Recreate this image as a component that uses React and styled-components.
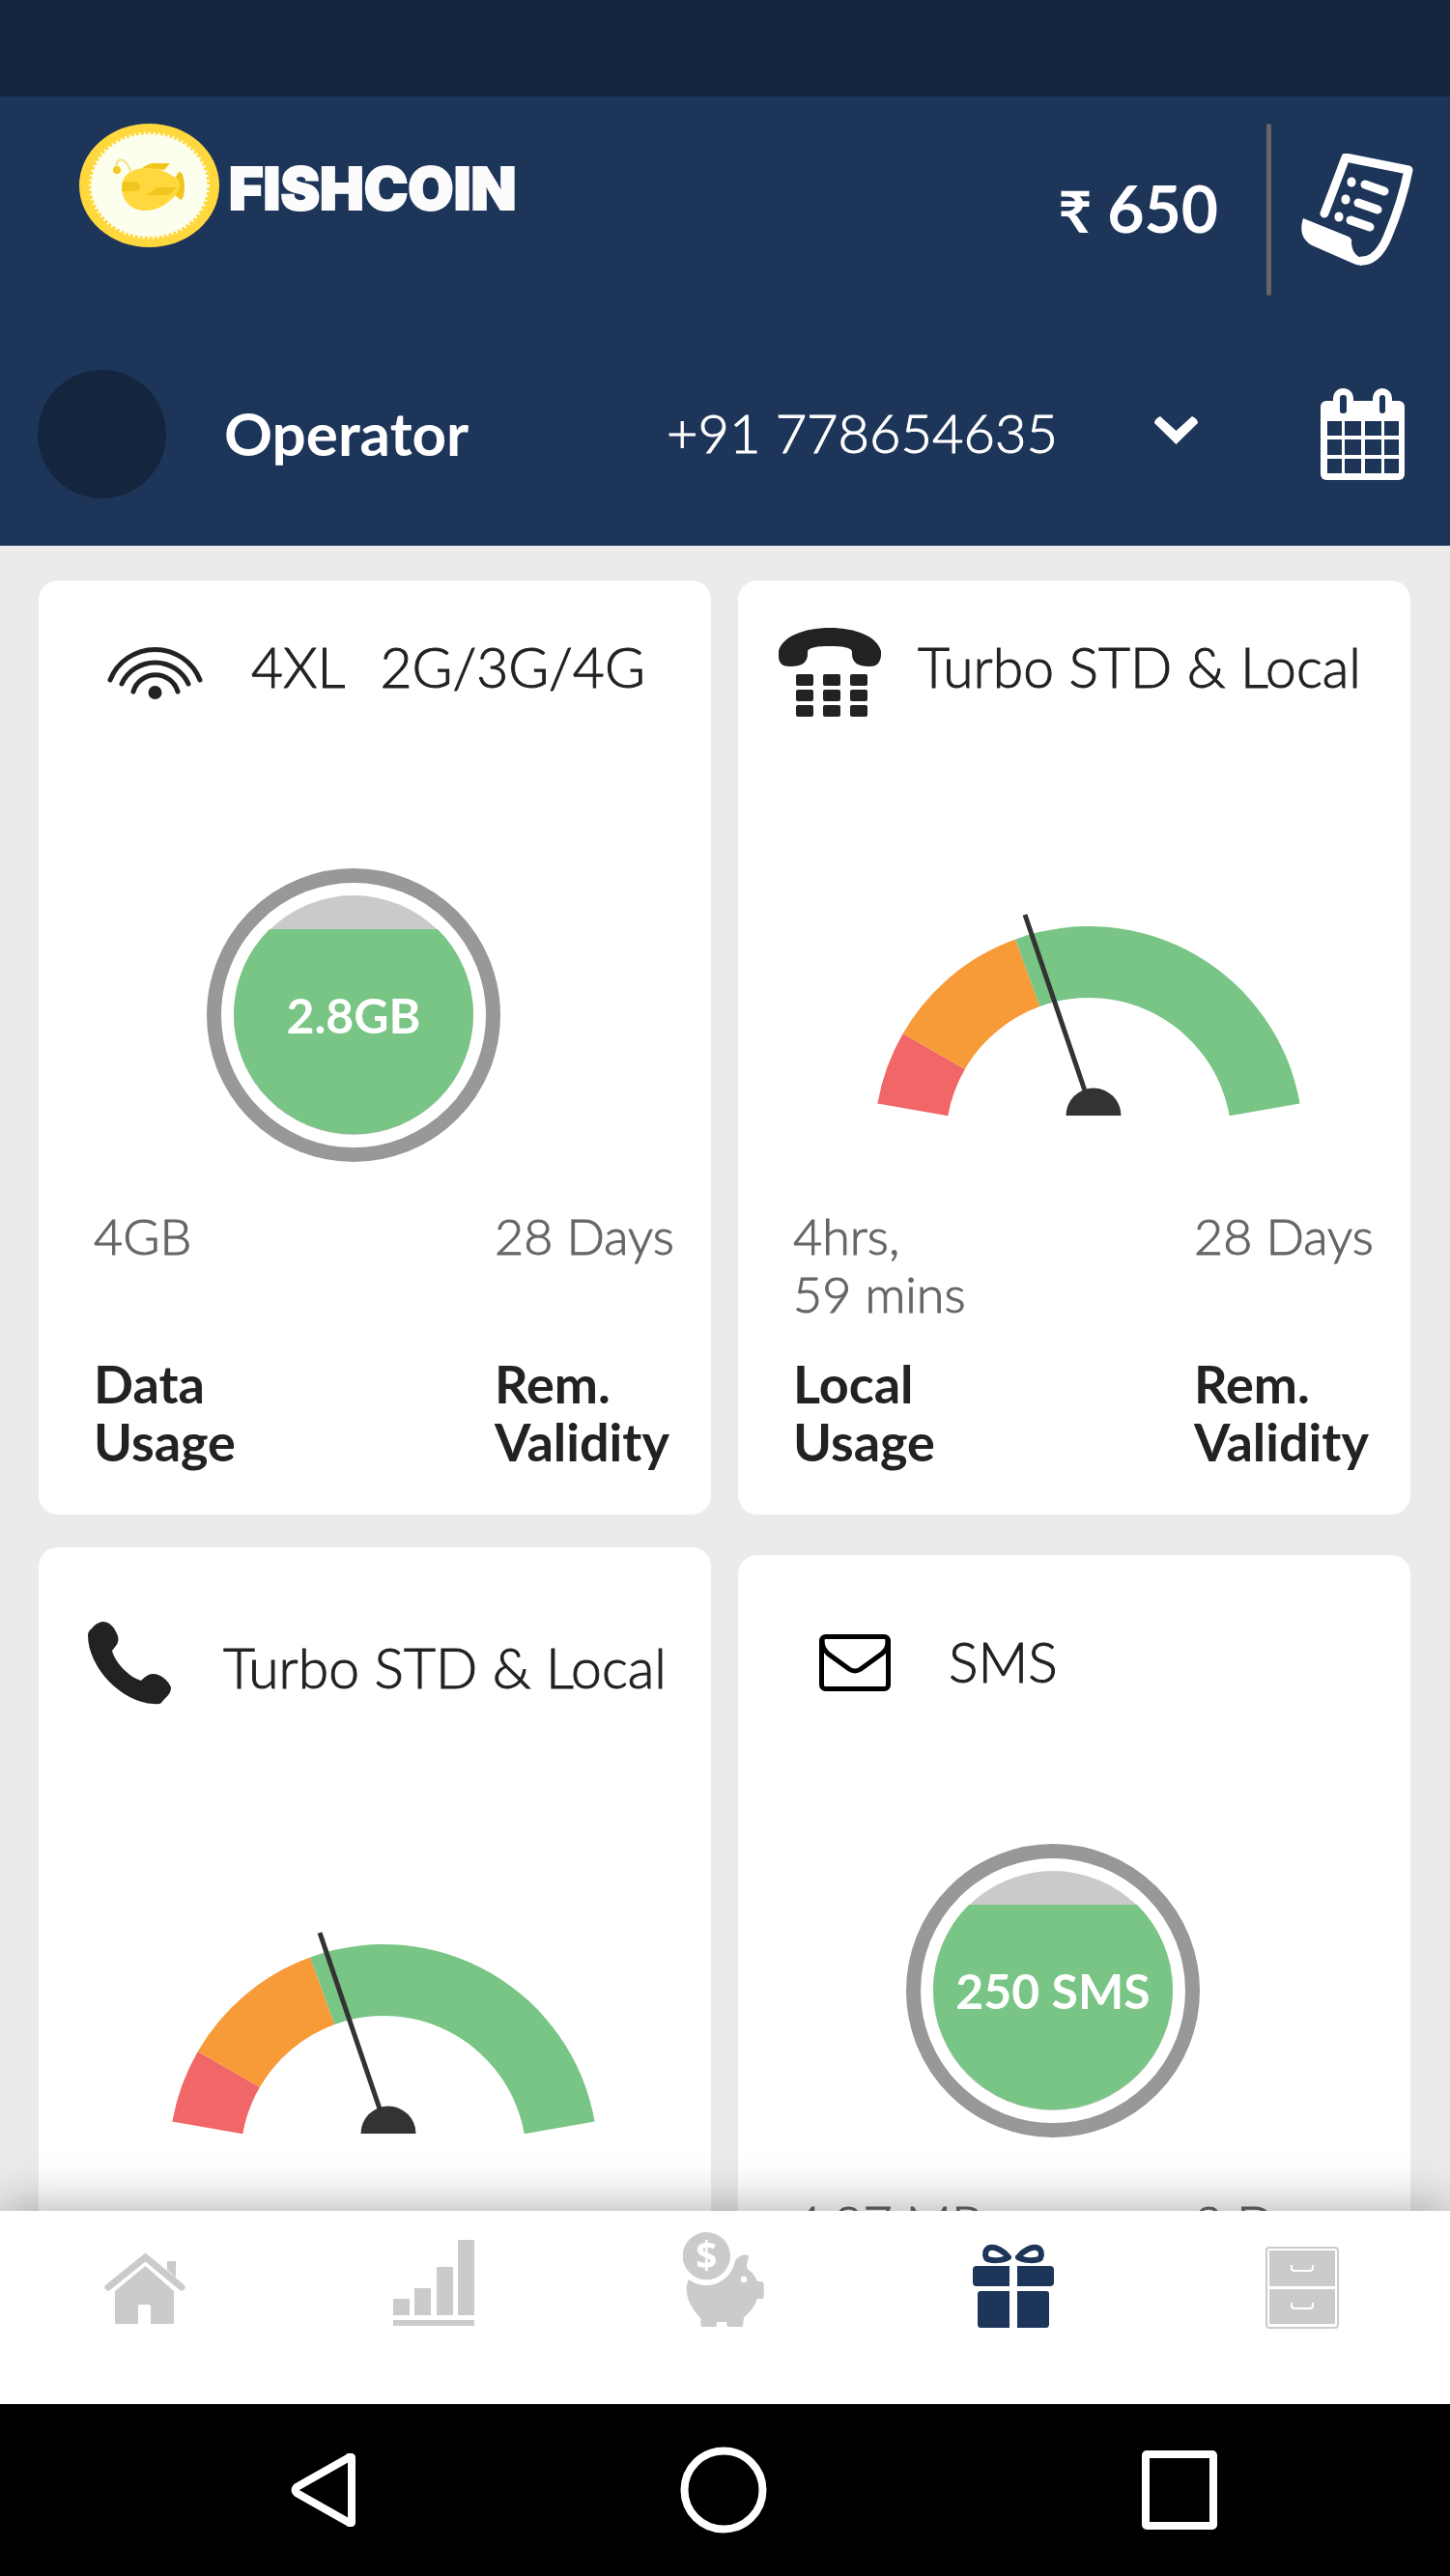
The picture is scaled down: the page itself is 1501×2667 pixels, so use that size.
import React from "react";
import styled, { createGlobalStyle } from "styled-components";

const color = {
  status: "#14263d",
  header: "#1e355a",
  page: "#ebebeb",
  ink: "#222221",
  muted: "#666666",
  idle: "#cbcbcb",
  green: "#79c585",
  orange: "#f79a38",
  red: "#f16667",
};

const GlobalStyle = createGlobalStyle`
  *, *::before, *::after { box-sizing: border-box; }
  body {
    margin: 0;
    background: ${color.page};
    color: ${color.ink};
    font-family: Lato, "Noto Sans", sans-serif;
  }
  svg { display: block; flex: none; }
`;

const Shell = styled.div`
  display: flex;
  flex-direction: column;
  height: 100vh;
`;

const StatusBar = styled.div`
  flex: none;
  height: 100px;
  background: ${color.status};
`;

const Header = styled.header`
  flex: none;
  display: flex;
  flex-direction: column;
  gap: 77px;
  padding: 28px 0 49px;
  background: ${color.header};
  color: #fff;
`;

const BrandRow = styled.div`
  display: flex;
  align-items: center;
  padding: 0 38px 0 82px;
`;

const Brand = styled.a`
  align-self: flex-start;
  display: flex;
  align-items: center;
  gap: 10px;
  margin-right: auto;
  color: #fcfcfc;
  text-decoration: none;
`;

const BrandName = styled.span`
  padding-top: 6px;
  font-family: Inter, sans-serif;
  font-size: 61px;
  font-weight: 900;
  line-height: 72px;
  -webkit-text-stroke: 2px;
`;

const Balance = styled.div`
  display: flex;
  align-items: baseline;
  gap: 16px;
  font-size: 66px;
  font-weight: 700;
  line-height: 80px;
`;

const Currency = styled.span`
  font-size: 60px;
`;

const Divider = styled.span`
  width: 5px;
  height: 178px;
  margin: 0 30px 0 50px;
  border-radius: 3px;
  background: ${color.muted};
`;

const IconButton = styled.button`
  flex: none;
  display: flex;
  padding: 0;
  border: 0;
  background: none;
  color: inherit;
  cursor: pointer;
`;

const OperatorRow = styled.div`
  display: flex;
  align-items: center;
  padding: 0 47px 0 39px;
`;

const Avatar = styled.span`
  flex: none;
  width: 133px;
  height: 133px;
  border-radius: 50%;
  background: ${color.status};
`;

const OperatorName = styled.span`
  margin: 0 auto 0 60px;
  padding-bottom: 4px;
  font-size: 62px;
  font-weight: 700;
  line-height: 72px;
`;

const NumberPicker = styled.label`
  display: grid;
  align-items: center;
  width: 550px;
  margin-right: 127px;

  & > * { grid-area: 1 / 1; }
  & > svg { justify-self: end; pointer-events: none; }
`;

const NumberSelect = styled.select`
  appearance: none;
  width: 100%;
  padding: 0 0 4px;
  border: 0;
  background: none;
  color: #fff;
  font: 300 56px/72px Lato, "Noto Sans", sans-serif;
  -webkit-text-stroke: 1px;
  cursor: pointer;
`;

const Board = styled.main`
  flex: 1;
  min-height: 0;
  overflow: hidden;
  display: flex;
  gap: 28px;
  padding: 36px 41px 36px 40px;
`;

const Column = styled.div`
  flex: 1;
  min-width: 0;
  display: flex;
  flex-direction: column;
  gap: ${(p) => p.$gap}px;
`;

const Card = styled.section`
  flex: none;
  min-height: 967px;
  padding-bottom: 45px;
  border-radius: 20px;
  background: #fff;
`;

const CardHead = styled.div`
  display: flex;
  align-items: center;
  gap: ${(p) => p.$gap}px;
  padding: ${(p) => p.$top}px 0 0 ${(p) => p.$left}px;
`;

const CardTitle = styled.h2`
  display: flex;
  gap: 36px;
  margin: 0;
  font-size: 57px;
  font-weight: 300;
  line-height: 60px;
  white-space: nowrap;
  -webkit-text-stroke: 1px;
`;

const Meter = styled.div`
  display: grid;
  place-items: center;
  justify-content: start;
  padding: ${(p) => p.$top}px 0 ${(p) => p.$bottom}px ${(p) => p.$left}px;

  & > * { grid-area: 1 / 1; }
`;

const MeterValue = styled.span`
  color: #fff;
  font-size: 50px;
  font-weight: 700;
  line-height: 60px;
`;

const Stats = styled.dl`
  display: grid;
  grid-template-columns: 415px 1fr;
  margin: 0;
  padding-left: 57px;
  line-height: 60px;
  white-space: pre-line;
`;

const Stat = styled.div`
  display: flex;
  flex-direction: column-reverse;
  justify-content: flex-end;
  gap: 34px;
`;

const StatLabel = styled.dt`
  font-size: 54px;
  font-weight: 700;
`;

const StatValue = styled.dd`
  min-height: 120px;
  margin: 0;
  color: ${color.muted};
  font-size: 52px;
  font-weight: 300;
  -webkit-text-stroke: 1px;
`;

const TabBar = styled.nav`
  position: relative;
  z-index: 1;
  flex: none;
  display: flex;
  align-items: flex-start;
  height: 200px;
  padding: 22px 3px 0 0;
  background: #fff;
  box-shadow: 0 0 50px rgba(0, 0, 0, 0.36);
`;

const Tab = styled.a`
  flex: 1;
  display: flex;
  justify-content: center;
  color: ${(p) => (p.$active ? color.header : color.idle)};
`;

const SystemBar = styled.div`
  position: relative;
  z-index: 2;
  flex: none;
  display: grid;
  grid-template-columns: 445fr 384fr 560fr;
  place-items: center;
  height: 178px;
  padding-left: 112px;
  background: #000;
  color: #fff;
`;

/* ---------- logo and header icons ---------- */

function CoinLogo() {
  return (
    <svg width="145" height="128" viewBox="0 0 145 128" aria-hidden="true">
      <ellipse cx="72.5" cy="64" rx="72.5" ry="64" fill="#ffd83d" />
      <ellipse cx="72.5" cy="64" rx="60" ry="53" fill="#fdffee" />
      <ellipse
        cx="72.5" cy="64" rx="61" ry="54"
        fill="none" stroke="#fdffee" strokeWidth="3" strokeDasharray="2 3"
      />
      <path d="M53 49C50 40 45 36 41 38Q38 40 38 47" fill="none" stroke="#f3df85" strokeWidth="2" />
      <circle cx="39" cy="48" r="4" fill="#f0cb25" />
      <path d="M65 46Q72 41 77 41H94L88 48Z" fill="#f0c61e" />
      <path d="M98 58L103 50Q108 49 109 64Q109 78 105 79L98 73Z" fill="#f0c61e" />
      <path d="M44 66C44 52 56 46 70 46C86 46 97 54 102 58Q106 65 102 71C94 82 82 90 68 90C54 90 44 80 44 66Z" fill="#ffd83d" />
      <path d="M45 60H58Q63 61 63 65Q63 69 58 70H44Z" fill="#f0c61e" />
      <path d="M70 74L79 67Q81 66 84 66H101L95 72Q93 74 89 74Z" fill="#f0c61e" />
    </svg>
  );
}

function StatementIcon() {
  return (
    <svg width="117" height="117" viewBox="0 0 117 117" fill="none" stroke="currentColor" strokeLinecap="round" strokeLinejoin="round" aria-hidden="true">
      <path d="M25 62L47 4L112 17C107 42 98 68 90 87C83 103 74 111 64 111" strokeWidth="9" />
      <path d="M3 67L50 86Q54 88 53 93C54 102 58 107 65 108L64 116Q58 116 53 113L12 95C2 89-1 80 3 67Z" fill="currentColor" stroke="none" />
      <path d="M53 29V30M47 47V48M40 65V66" strokeWidth="9" />
      <path d="M67 32L87 39M60 51L80 58M52 69L72 76" strokeWidth="9" />
    </svg>
  );
}

const calendarColumns = [[7, 15], [25, 17], [46, 17], [66, 15]];
const calendarRows = [[34, 15], [53, 16], [73, 15]];

function CalendarIcon() {
  return (
    <svg width="87" height="95" viewBox="0 0 87 95" aria-hidden="true">
      <rect y="13" width="87" height="82" rx="6" fill="currentColor" />
      <rect x="13" width="21" height="32" rx="10" fill="currentColor" />
      <rect x="54" width="20" height="32" rx="10" fill="currentColor" />
      <rect x="20" y="7" width="7" height="19" rx="3" fill={color.header} />
      <rect x="61" y="7" width="6" height="19" rx="3" fill={color.header} />
      {calendarRows.map(([y, h]) =>
        calendarColumns.map(([x, w]) => (
          <rect key={`${x}-${y}`} x={x} y={y} width={w} height={h} fill={color.header} />
        ))
      )}
    </svg>
  );
}

function ChevronIcon() {
  return (
    <svg width="45" height="38" viewBox="0 0 45 38" fill="currentColor" aria-hidden="true">
      <path d="M6 0L22.500 15L39 0Q45 3 45 7L22.500 29L0 7Q0 3 6 0Z" />
    </svg>
  );
}

/* ---------- card icons, all on a 106px tall canvas ---------- */

function SignalIcon() {
  return (
    <svg width="99" height="106" viewBox="0 0 99 106" fill="none" stroke={color.ink} strokeWidth="5" strokeLinecap="round" aria-hidden="true">
      <path d="M3 67A50 50 0 0 1 96 67" />
      <path d="M15 71A38 38 0 0 1 84 71" />
      <path d="M27 79A24 24 0 0 1 73 79" />
      <circle cx="49.500" cy="80" r="7" fill={color.ink} stroke="none" />
    </svg>
  );
}

function DeskPhoneIcon() {
  return (
    <svg width="106" height="106" viewBox="0 0 106 106" fill={color.ink} aria-hidden="true">
      <path d="M0 37C4 22 26 13 53 13C80 13 102 22 106 37V42C105 50 101 53 94 53C82 53 76 49 76 40V38C76 33 65 32 53 32C41 32 30 33 30 38V40C30 49 24 53 12 53C4 53 0 50 0 42Z" />
      {[61, 77, 93].map((y) =>
        [18, 46, 74].map((x) => (
          <rect key={`${x}-${y}`} x={x} y={y} width="18" height="12" rx="2" />
        ))
      )}
    </svg>
  );
}

function HandsetIcon() {
  return (
    <svg width="86" height="106" viewBox="0 0 86 106" fill={color.ink} aria-hidden="true">
      <path d="M0 20Q0 16 4 13C8 8 12 6 16 6C24 6 29 15 31 21C33 28 28 32 25 36C28 48 42 63 55 67C58 64 62 60 67 60C76 60 84 68 86 74C86 82 80 84 76 90Q74 92 68 91C36 90 0 54 0 20Z" />
    </svg>
  );
}

function EnvelopeIcon() {
  return (
    <svg width="74" height="106" viewBox="0 0 74 106" fill="none" stroke="#000" strokeWidth="5" aria-hidden="true">
      <rect x="2.500" y="27.500" width="69" height="54" rx="4" />
      <path d="M3 30C3 38 5 41 9 45L31 61Q37 65 43 61L65 45C70 41 71 38 71 30" />
    </svg>
  );
}

/* ---------- meters ---------- */

function Tank() {
  return (
    <svg width="304" height="304" viewBox="0 0 304 304" aria-hidden="true">
      <circle cx="152" cy="152" r="144.500" fill="#fff" stroke="#989898" strokeWidth="15" />
      <circle cx="152" cy="152" r="124" fill="#cacaca" />
      <path d="M65 63A124 124 0 1 0 239 63Z" fill={color.green} />
    </svg>
  );
}

function arcBand(from, to) {
  const at = (r, deg) => {
    const a = (deg * Math.PI) / 180;
    return `${219 - r * Math.cos(a)} ${235 - r * Math.sin(a)}`;
  };
  return `M${at(222, from)}A222 222 0 0 1 ${at(222, to)}L${at(148, to)}A148 148 0 0 0 ${at(148, from)}Z`;
}

function Dial() {
  return (
    <svg width="438" height="210" viewBox="0 0 438 210" aria-hidden="true">
      <path d={arcBand(10, 30)} fill={color.red} />
      <path d={arcBand(30, 70)} fill={color.orange} />
      <path d={arcBand(70, 170)} fill={color.green} />
      <path d="M153 1L219 195" stroke="#333" strokeWidth="5" />
      <path d="M195.500 209A28.500 28.500 0 0 1 252.500 209Z" fill="#333" />
    </svg>
  );
}

/* ---------- tab icons, all on a 100px tall canvas ---------- */

function HomeIcon() {
  return (
    <svg width="84" height="100" viewBox="0 0 84 100" fill="currentColor" aria-hidden="true">
      <path d="M4 57L42.500 26L80 57" fill="none" stroke="currentColor" strokeWidth="7" strokeLinecap="round" />
      <path d="M65 30H74V47L65 39Z" />
      <path d="M11 61L42.500 35L72 61V94Q72 95 70 95H48V77Q48 75 46 75H37Q35 75 35 77V95H13Q11 95 11 94Z" />
    </svg>
  );
}

function BarsIcon() {
  return (
    <svg width="84" height="100" viewBox="0 0 84 100" fill="currentColor" aria-hidden="true">
      <path d="M0 69H17V86H0ZM22 58H39V86H22ZM45 36H62V86H45ZM67 8H84V86H67ZM0 91H84V97H0Z" />
    </svg>
  );
}

const CoinSign = styled.text`
  font: 700 116px "Open Sans", sans-serif;
  text-anchor: middle;
`;

function PiggyIcon() {
  return (
    <svg width="84" height="100" viewBox="51 33 252 300" fill="currentColor" aria-hidden="true">
      <circle cx="124" cy="107" r="74" />
      <CoinSign x="124" y="148" fill="#fff">$</CoinSign>
      <path d="M70 180A90 90 0 0 0 212 125C218 108 240 100 254 105C258 120 243 128 252 148C270 160 278 175 281 186H293Q302 187 302 196V230Q302 240 292 240H281C275 265 255 285 243 295C240 300 238 305 238 320Q238 327 232 327H192Q187 327 187 320V312H156V320Q156 327 150 327H112Q106 327 106 320V300C80 275 62 240 62 210C62 195 66 185 70 180Z" />
      <circle cx="240" cy="180" r="10" fill="#fff" />
    </svg>
  );
}

function GiftIcon() {
  return (
    <svg width="84" height="100" viewBox="0 0 84 100" fill="currentColor" aria-hidden="true">
      <path d="M4 35H38V56H4Q0 56 0 52V39Q0 35 4 35ZM46 35H80Q84 35 84 39V52Q84 56 80 56H46Z" />
      <path d="M8 61H38V99H8Q5 99 5 95V64Q5 61 8 61ZM46 61H76Q79 61 79 64V95Q79 99 76 99H46Z" />
      <path d="M37 26C32 19 23 15 18 16C13 17 12 23 14 27C18 30 31 30 37 26ZM47 26C52 19 61 15 66 16C71 17 72 23 70 27C66 30 53 30 47 26Z" fill="none" stroke="currentColor" strokeWidth="6" strokeLinejoin="round" />
    </svg>
  );
}

function CabinetIcon() {
  return (
    <svg width="76" height="100" viewBox="0 0 76 100" fill="none" aria-hidden="true">
      <rect x="1" y="16" width="74" height="83" rx="3" stroke="currentColor" strokeWidth="2" />
      <path d="M4 19H72V56H4ZM4 59H72V95H4Z" fill="currentColor" />
      <path d="M27 34V37Q27 40 30 40H46Q49 40 49 37V34M27 73V76Q27 79 30 79H46Q49 79 49 76V73" stroke="#fff" strokeWidth="2" />
    </svg>
  );
}

/* ---------- page parts ---------- */

function StatList({ items }) {
  return (
    <Stats>
      {items.map((item) => (
        <Stat key={item.value}>
          {item.label && <StatLabel>{item.label}</StatLabel>}
          <StatValue>{item.value}</StatValue>
        </Stat>
      ))}
    </Stats>
  );
}

const tabs = [
  { name: "Home", Icon: HomeIcon },
  { name: "Usage", Icon: BarsIcon },
  { name: "Savings", Icon: PiggyIcon },
  { name: "Packs", Icon: GiftIcon, active: true },
  { name: "Records", Icon: CabinetIcon },
];

export default function App() {
  return (
    <Shell>
      <GlobalStyle />
      <StatusBar />
      <Header>
        <BrandRow>
          <Brand href="#home">
            <CoinLogo />
            <BrandName>FISHCOIN</BrandName>
          </Brand>
          <Balance>
            <Currency>₹</Currency>
            <span>650</span>
          </Balance>
          <Divider />
          <IconButton type="button" aria-label="Statement">
            <StatementIcon />
          </IconButton>
        </BrandRow>
        <OperatorRow>
          <Avatar />
          <OperatorName>Operator</OperatorName>
          <NumberPicker>
            <NumberSelect aria-label="Phone number" defaultValue="778654635">
              <option value="778654635">+91 778654635</option>
            </NumberSelect>
            <ChevronIcon />
          </NumberPicker>
          <IconButton type="button" aria-label="Calendar">
            <CalendarIcon />
          </IconButton>
        </OperatorRow>
      </Header>

      <Board>
        <Column $gap={34}>
          <Card>
            <CardHead $top={36} $left={71} $gap={50}>
              <SignalIcon />
              <CardTitle>
                <span>4XL</span>
                <span>2G/3G/4G</span>
              </CardTitle>
            </CardHead>
            <Meter $top={156} $left={174} $bottom={46}>
              <Tank />
              <MeterValue>2.8GB</MeterValue>
            </Meter>
            <StatList
              items={[
                { label: "Data\nUsage", value: "4GB" },
                { label: "Rem.\nValidity", value: "28 Days" },
              ]}
            />
          </Card>
          <Card>
            <CardHead $top={71} $left={51} $gap={54}>
              <HandsetIcon />
              <CardTitle>Turbo STD &amp; Local</CardTitle>
            </CardHead>
            <Meter $top={221} $left={138} $bottom={94}>
              <Dial />
            </Meter>
          </Card>
        </Column>

        <Column $gap={42}>
          <Card>
            <CardHead $top={36} $left={42} $gap={38}>
              <DeskPhoneIcon />
              <CardTitle>Turbo STD &amp; Local</CardTitle>
            </CardHead>
            <Meter $top={203} $left={144} $bottom={93}>
              <Dial />
            </Meter>
            <StatList
              items={[
                { label: "Local\nUsage", value: "4hrs,\n59 mins" },
                { label: "Rem.\nValidity", value: "28 Days" },
              ]}
            />
          </Card>
          <Card>
            <CardHead $top={57} $left={84} $gap={60}>
              <EnvelopeIcon />
              <CardTitle>SMS</CardTitle>
            </CardHead>
            <Meter $top={136} $left={174} $bottom={58}>
              <Tank />
              <MeterValue>250 SMS</MeterValue>
            </Meter>
            <StatList items={[{ value: "4.87 MB" }, { value: "2 Days" }]} />
          </Card>
        </Column>
      </Board>

      <TabBar>
        {tabs.map(({ name, Icon, active }) => (
          <Tab key={name} href={`#${name.toLowerCase()}`} aria-label={name} $active={active}>
            <Icon />
          </Tab>
        ))}
      </TabBar>

      <SystemBar>
        <IconButton type="button" aria-label="Back">
          <svg width="67" height="76" viewBox="0 0 67 76" fill="none" stroke="currentColor" strokeWidth="8" strokeLinejoin="round">
            <path d="M63 4V72Q61 73 59 71L6 41Q3 38 6 35L59 5Q61 3 63 4Z" />
          </svg>
        </IconButton>
        <IconButton type="button" aria-label="Home screen">
          <svg width="90" height="90" viewBox="0 0 90 90" fill="none" stroke="currentColor" strokeWidth="8">
            <circle cx="45" cy="45" r="40.500" />
          </svg>
        </IconButton>
        <IconButton type="button" aria-label="Recent apps">
          <svg width="78" height="82" viewBox="0 0 78 82" fill="none" stroke="currentColor" strokeWidth="8" strokeLinejoin="round">
            <rect x="4" y="4" width="70" height="74" rx="1" />
          </svg>
        </IconButton>
      </SystemBar>
    </Shell>
  );
}
